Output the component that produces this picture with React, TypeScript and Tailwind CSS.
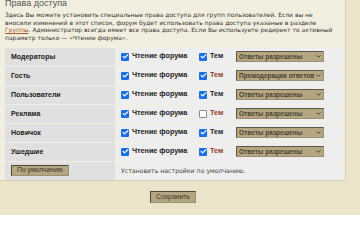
import { Check, ChevronDown } from 'lucide-react';

type Row = { name: string; topic: boolean; red?: boolean; answer: string };

const rows: Row[] = [
  { name: 'Модераторы', topic: true, answer: 'Ответы разрешены' },
  { name: 'Гость', topic: true, red: true, answer: 'Премодерация ответов' },
  { name: 'Пользователи', topic: true, answer: 'Ответы разрешены' },
  { name: 'Реклама', topic: false, red: true, answer: 'Ответы разрешены' },
  { name: 'Новичок', topic: true, answer: 'Ответы разрешены' },
  { name: 'Ушедшие', topic: true, red: true, answer: 'Ответы разрешены' },
];

function Box({ checked }: { checked: boolean }) {
  return checked ? (
    <span className="flex h-[8px] w-[8px] items-center justify-center rounded-[1px] bg-[#1b6fe0]">
      <Check size={7} strokeWidth={4} className="text-white" />
    </span>
  ) : (
    <span className="h-[8px] w-[8px] rounded-[1px] border border-[#8a8a8a] bg-white" />
  );
}

function Select({ value }: { value: string }) {
  return (
    <div className="flex h-[11px] w-[88px] items-center justify-between border border-[#5e5646] border-b-[#9a8f72] border-r-[#9a8f72] bg-[#b4a681] pl-[2px] pr-[1px] text-[6.5px] leading-none text-[#4a4233]">
      <span className="whitespace-nowrap">{value}</span>
      <ChevronDown size={7} strokeWidth={3} className="shrink-0 text-[#3a3326]" />
    </div>
  );
}

export default function App() {
  return (
    <div className="h-[215px] w-[360px] overflow-hidden bg-[#ebe4cb] font-['Liberation_Sans',Arial,sans-serif]">
      <div className="h-[184px] w-[346px] border-r border-b border-[#d9d1b6] bg-[#f3efe0]">
        <div className="-mt-[3px] px-[5px] text-[9px] leading-[12px] text-[#555]">Права доступа</div>
        <p className="mt-[2px] whitespace-nowrap px-[5px] font-['DejaVu_Sans',Verdana,sans-serif] text-[6px] leading-[7.7px] text-[#333]">
          Здесь Вы можете установить специальные права доступа для групп пользователей. Если вы не
          <br />
          вносили изменений в этот список, форум будет использовать права доступа указаные в разделе
          <br />
          <span className="text-[#a4592f] underline">Группы</span>. Администратор всегда имеет все права доступа. Если Вы
          используете редирект то активный
          <br />
          параметр только — «Чтение форума».
        </p>
        <div className="mt-[6px] flex w-[344px] flex-col gap-[1px] pl-[5px] pr-[1px]">
          {rows.map(r => (
            <div key={r.name} className="flex h-[18px]">
              <div className="flex w-[110px] items-center bg-[#e0e0e0] pl-[6px] text-[7px] font-bold text-[#222]">
                {r.name}
              </div>
              <div className="ml-[1px] flex flex-1 items-center bg-[#eeeeee] pl-[5px] text-[7.2px] font-bold text-[#222]">
                <Box checked />
                <span className="ml-[3px] w-[67px]">Чтение форума</span>
                <Box checked={r.topic} />
                <span className={`ml-[3px] w-[26px] ${r.red ? 'text-[#8e3b26]' : ''}`}>Тем</span>
                <Select value={r.answer} />
              </div>
            </div>
          ))}
          <div className="flex h-[18px]">
            <div className="flex w-[110px] items-center bg-[#e0e0e0] pl-[6px]">
              <button className="h-[11px] border border-[#4e4737] border-b-[#9a8f72] border-r-[#9a8f72] bg-[#b4a681] px-[5px] text-[6.8px] leading-none text-[#3a3326]">
                По умолчанию
              </button>
            </div>
            <div className="ml-[1px] flex flex-1 items-center bg-[#eeeeee] pl-[5px] font-['DejaVu_Sans',Verdana,sans-serif] text-[6.2px] text-[#444]">
              Установить настройки по умолчанию.
            </div>
          </div>
        </div>
      </div>
      <div className="mt-[10px] flex justify-center pr-[14px]">
        <button className="h-[12px] border border-[#4e4737] border-b-[#9a8f72] border-r-[#9a8f72] bg-[#b4a681] px-[5px] text-[6.8px] leading-none text-[#3a3326]">
          Сохранить
        </button>
      </div>
    </div>
  );
}
